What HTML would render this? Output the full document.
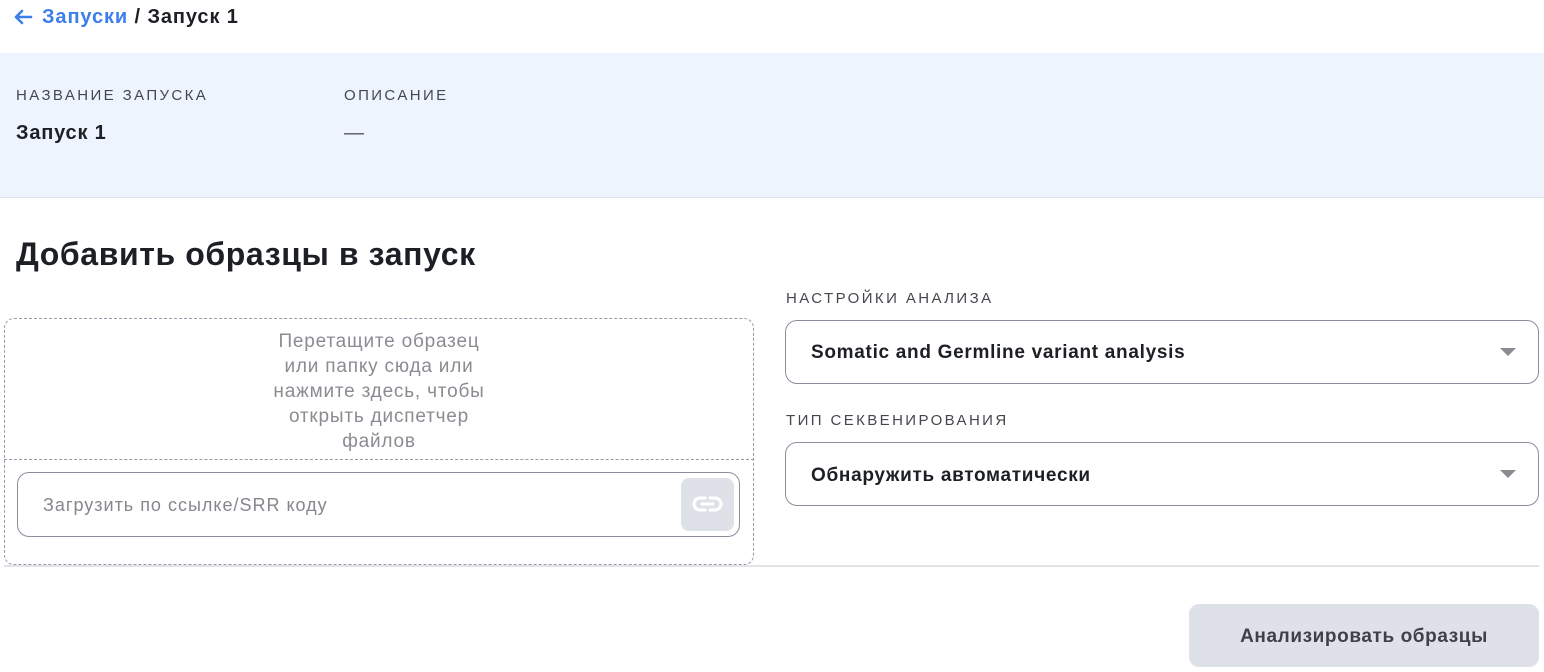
<!DOCTYPE html>
<html><head><meta charset="utf-8"><style>
*{box-sizing:border-box;margin:0;padding:0}
body{width:1544px;height:672px;background:#fff;font-family:"Liberation Sans","Noto Sans CJK SC",sans-serif;color:#1c1f24;position:relative;overflow:hidden}
.abs{position:absolute}
.lbl{font-size:15px;letter-spacing:2.4px;color:#44474d}
</style></head><body>
<svg class="abs" style="left:12px;top:8px" width="22" height="18" viewBox="0 0 22 18"><path d="M19 9H4M10 3L4 9l6 6" fill="none" stroke="#3d7eed" stroke-width="2.6" stroke-linecap="round" stroke-linejoin="round"/></svg>
<div class="abs" style="left:42px;top:6px;font-size:20px;font-weight:bold;letter-spacing:0.9px"><span style="color:#3d7eed">Запуски</span> / Запуск 1</div>
<div class="abs" style="left:0;top:53px;width:1544px;height:145px;background:#edf4fe;border-bottom:1px solid #dfe3ea"></div>
<div class="abs lbl" style="left:16px;top:87px">НАЗВАНИЕ ЗАПУСКА</div>
<div class="abs lbl" style="left:344px;top:87px">ОПИСАНИЕ</div>
<div class="abs" style="left:16px;top:122px;font-size:20px;font-weight:bold;letter-spacing:0.8px">Запуск 1</div>
<div class="abs" style="left:344px;top:122px;font-size:20px;color:#555">—</div>
<div class="abs" style="left:16px;top:236px;font-size:32px;font-weight:bold;letter-spacing:0.6px">Добавить образцы в запуск</div>
<div class="abs" style="left:4px;top:318px;width:750px;height:247px;border:1px dashed #9a98a8;border-radius:10px"></div>
<div class="abs" style="left:4px;top:459px;width:750px;border-top:1px dashed #9a98a8"></div>
<div class="abs" style="left:229px;top:329px;width:300px;text-align:center;font-size:19px;line-height:25px;color:#8a8c92;letter-spacing:0.8px">Перетащите образец<br>или папку сюда или<br>нажмите здесь, чтобы<br>открыть диспетчер<br>файлов</div>
<div class="abs" style="left:17px;top:472px;width:723px;height:65px;border:1px solid #8e8c9c;border-radius:12px"></div>
<div class="abs" style="left:43px;top:495px;font-size:18px;color:#85878d;letter-spacing:1px">Загрузить по ссылке/SRR коду</div>
<div class="abs" style="left:681px;top:478px;width:53px;height:53px;background:#dfe1e8;border-radius:8px">
<svg width="53" height="53" viewBox="0 0 53 53"><g fill="none" stroke="#fff" stroke-width="3" stroke-linecap="round"><path d="M24 20h-5a6 6 0 0 0 0 12h5M29 20h5a6 6 0 0 1 0 12h-5M21 26h11"/></g></svg></div>
<div class="abs lbl" style="left:786px;top:290px">НАСТРОЙКИ АНАЛИЗА</div>
<div class="abs" style="left:785px;top:320px;width:754px;height:64px;border:1px solid #8e8c9c;border-radius:12px"></div>
<div class="abs" style="left:811px;top:342px;font-size:19px;font-weight:bold;letter-spacing:0.7px">Somatic and Germline variant analysis</div>
<div class="abs lbl" style="left:786px;top:412px">ТИП СЕКВЕНИРОВАНИЯ</div>
<div class="abs" style="left:785px;top:442px;width:754px;height:64px;border:1px solid #8e8c9c;border-radius:12px"></div>
<div class="abs" style="left:811px;top:465px;font-size:19px;font-weight:bold;letter-spacing:0.7px">Обнаружить автоматически</div>
<div class="abs" style="left:1500px;top:348px;width:0;height:0;border-left:8px solid transparent;border-right:8px solid transparent;border-top:8px solid #8a8c92"></div>
<div class="abs" style="left:1500px;top:470px;width:0;height:0;border-left:8px solid transparent;border-right:8px solid transparent;border-top:8px solid #8a8c92"></div>
<div class="abs" style="left:4px;top:565px;width:1535px;height:2px;background:#e2e4e8"></div>
<div class="abs" style="left:1189px;top:604px;width:350px;height:63px;background:#dfe1e8;border-radius:10px;text-align:center;line-height:65px;font-size:19px;font-weight:bold;color:#3e4148;letter-spacing:0.6px">Анализировать образцы</div>
</body></html>
